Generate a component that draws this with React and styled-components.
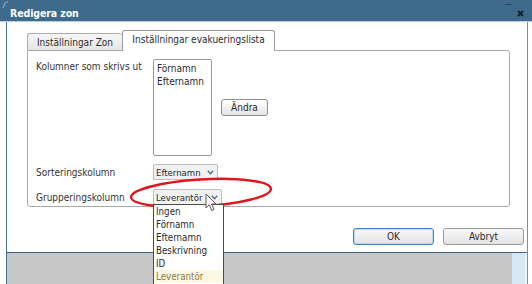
import React from "react";
import styled, { createGlobalStyle } from "styled-components";

const Global = createGlobalStyle`
  html, body { margin: 0; padding: 0; background: #ffffff; }
  body { font-family: "DejaVu Sans Condensed", "DejaVu Sans", sans-serif; font-size: 10px; color: #2a2a2a; }
  * { box-sizing: border-box; }
`;

const Page = styled.div`
  position: relative;
  width: 532px;
  height: 284px;
  overflow: hidden;
  display: flex;
  flex-direction: column;
  background: #ffffff;
`;

const TitleBar = styled.div`
  height: 22px;
  flex: none;
  display: flex;
  align-items: flex-start;
  background: #3e6b8b;
  border-bottom: 1px solid #b8cfdf;
  padding: 0 6px 0 2px;
`;

const Mark = styled.svg`
  width: 8px;
  height: 10px;
  flex: none;
`;

const Title = styled.div`
  margin-top: 7px;
  color: #ffffff;
  font-weight: bold;
  font-size: 10.5px;
  line-height: 12px;
  letter-spacing: -0.1px;
`;

const Controls = styled.svg`
  margin-left: auto;
  width: 24px;
  height: 20px;
  flex: none;
`;

const Frame = styled.div`
  flex: 1;
  display: flex;
  flex-direction: column;
  margin-left: 6px;
  width: 522px;
  border-left: 1px solid #4a6f8c;
  border-right: 1px solid #7890a4;
`;

const Dialog = styled.div`
  height: 231px;
  flex: none;
  background: #ffffff;
  border-bottom: 1px solid #3f6482;
  padding: 8px 3px 0 20px;
  display: flex;
  flex-direction: column;
`;

const TabStrip = styled.div`
  display: flex;
  align-items: flex-end;
  height: 21px;
  margin-bottom: -1px;
  position: relative;
  z-index: 1;
`;

const Tab = styled.div`
  height: ${(p) => (p.$active ? "21px" : "17px")};
  width: ${(p) => p.$w}px;
  margin-bottom: ${(p) => (p.$active ? "0" : "1px")};
  border: 1px solid ${(p) => (p.$active ? "#9c9c9c" : "#ababab")};
  border-bottom: none;
  ${(p) => (p.$active ? "" : "border-right: none;")}
  border-radius: 3px 3px 0 0;
  background: ${(p) =>
    p.$active ? "#ffffff" : "linear-gradient(#f6f6f6, #e6e6e6)"};
  color: #2b2b2b;
  display: flex;
  align-items: center;
  justify-content: center;
  padding-bottom: ${(p) => (p.$active ? "3px" : "0")};
  white-space: nowrap;
`;

const Panel = styled.div`
  width: 483px;
  height: 157px;
  flex: none;
  border: 1px solid #a9a9a9;
  border-radius: 0 3px 3px 3px;
  padding: 7px 0 0 8px;
  display: grid;
  grid-template-columns: 117px auto;
  grid-auto-rows: auto;
  row-gap: 7px;
  align-items: center;
`;

const Label = styled.div`
  color: #333333;
  line-height: 13px;
  align-self: ${(p) => (p.$top ? "start" : "center")};
  margin-top: ${(p) => (p.$top ? "2px" : "0")};
  white-space: nowrap;
`;

const ListRow = styled.div`
  display: flex;
  align-items: center;
  gap: 9px;
`;

const ListBox = styled.div`
  width: 59px;
  height: 97px;
  border: 1px solid #9a9a9a;
  border-radius: 2px;
  padding: 2px 3px;
  line-height: 13px;
  color: #2a2a2a;
`;

const SmallButton = styled.div`
  width: 47px;
  height: 17px;
  border: 1px solid #8e8e8e;
  border-radius: 3px;
  background: linear-gradient(#ffffff, #e4e4e4);
  display: flex;
  align-items: center;
  justify-content: center;
  color: #2a2a2a;
`;

const SelectWrap = styled.div`
  position: relative;
  width: ${(p) => p.$w}px;
  justify-self: start;
`;

const Select = styled.div`
  height: 16px;
  border: 1px solid #bcbcbc;
  border-radius: 2px;
  background: #f1f1f1;
  display: flex;
  align-items: center;
  justify-content: space-between;
  padding: 0 3px 0 2px;
  font-size: 9.5px;
  color: #2a2a2a;
  white-space: nowrap;
`;

const Chevron = styled.svg`
  width: 7px;
  height: 5px;
  flex: none;
`;

const DropList = styled.div`
  position: absolute;
  left: 0;
  top: 15px;
  width: 71px;
  border: 1px solid #4a4a4a;
  background: #ffffff;
  z-index: 3;
  padding: 0 0 1px;
`;

const DropItem = styled.div`
  height: 13px;
  line-height: 13px;
  padding: 0 2px;
  font-size: 9.7px;
  color: ${(p) => (p.$hl ? "#8c7a3a" : "#2a2a2a")};
  background: ${(p) => (p.$hl ? "#fbf8e4" : "transparent")};
  white-space: nowrap;
`;

const ButtonRow = styled.div`
  margin-top: 21px;
  display: flex;
  justify-content: flex-end;
  gap: 9px;
`;

const DialogButton = styled.div`
  width: 81px;
  height: 17px;
  border: 1px solid ${(p) => (p.$focus ? "#3a86c0" : "#9b9b9b")};
  box-shadow: ${(p) => (p.$focus ? "inset 0 0 0 1px #b4dcf4" : "none")};
  border-radius: 3px;
  background: linear-gradient(#f8f8f8, #e3e3e3);
  display: flex;
  align-items: center;
  justify-content: center;
  color: #2a2a2a;
`;

const Backdrop = styled.div`
  flex: 1;
  display: flex;
`;

const Gray = styled.div`
  flex: 1;
  background: #c6c6c6;
`;

const Strip = styled.div`
  width: ${(p) => p.$w}px;
  background: ${(p) => p.$c};
`;

const Ellipse = styled.svg`
  position: absolute;
  left: 125px;
  top: 174px;
  width: 154px;
  height: 40px;
  z-index: 2;
  pointer-events: none;
`;

const Cursor = styled.svg`
  position: absolute;
  left: 205px;
  top: 193px;
  width: 13px;
  height: 19px;
  z-index: 4;
`;

const ChevronIcon = () => (
  <Chevron viewBox="0 0 7 5">
    <path d="M0.8 0.8 L3.5 3.8 L6.2 0.8" fill="none" stroke="#5b6b7b" strokeWidth="1.4" />
  </Chevron>
);

export default function App() {
  const options = ["Ingen", "Förnamn", "Efternamn", "Beskrivning", "ID", "Leverantör"];
  return (
    <>
      <Global />
      <Page>
        <TitleBar>
          <Mark viewBox="0 0 8 10">
            <path d="M1 8 L3.5 2 M4 3 L6 1" stroke="#a9c4d8" strokeWidth="0.8" fill="none" />
          </Mark>
          <Title>Redigera zon</Title>
          <Controls viewBox="0 0 24 20">
            <path d="M3 4.5 H10" stroke="#2a4a62" strokeWidth="1.2" />
            <path d="M16 11 L21 16 M21 11 L16 16" stroke="#0f1f2c" strokeWidth="1.8" />
          </Controls>
        </TitleBar>
        <Frame>
          <Dialog>
            <TabStrip>
              <Tab $w={95}>Inställningar Zon</Tab>
              <Tab $w={153} $active>
                Inställningar evakueringslista
              </Tab>
            </TabStrip>
            <Panel>
              <Label $top>Kolumner som skrivs ut</Label>
              <ListRow>
                <ListBox>
                  <div>Förnamn</div>
                  <div>Efternamn</div>
                </ListBox>
                <SmallButton>Ändra</SmallButton>
              </ListRow>
              <Label>Sorteringskolumn</Label>
              <SelectWrap $w={65}>
                <Select>
                  Efternamn
                  <ChevronIcon />
                </Select>
              </SelectWrap>
              <Label>Grupperingskolumn</Label>
              <SelectWrap $w={69}>
                <Select>
                  Leverantör
                  <ChevronIcon />
                </Select>
                <DropList>
                  {options.map((o) => (
                    <DropItem key={o} $hl={o === "Leverantör"}>
                      {o}
                    </DropItem>
                  ))}
                </DropList>
              </SelectWrap>
            </Panel>
            <ButtonRow>
              <DialogButton $focus>OK</DialogButton>
              <DialogButton>Avbryt</DialogButton>
            </ButtonRow>
          </Dialog>
          <Backdrop>
            <Gray />
            <Strip $w={13} $c="#d7e7f3" />
            <Strip $w={2} $c="#eef3f7" />
          </Backdrop>
        </Frame>
        <Ellipse viewBox="0 0 154 40">
          <ellipse
            cx="76"
            cy="19"
            rx="70"
            ry="13.5"
            fill="none"
            stroke="#e0161c"
            strokeWidth="2.4"
            transform="rotate(-3.5 76 19)"
          />
        </Ellipse>
        <Cursor viewBox="0 0 13 19">
          <path
            d="M1 1 L1 15 L4.3 11.8 L6.8 17.5 L9 16.5 L6.6 11 L11 11 Z"
            fill="#ffffff"
            stroke="#5a5a5a"
            strokeWidth="1"
            strokeLinejoin="round"
          />
        </Cursor>
      </Page>
    </>
  );
}
